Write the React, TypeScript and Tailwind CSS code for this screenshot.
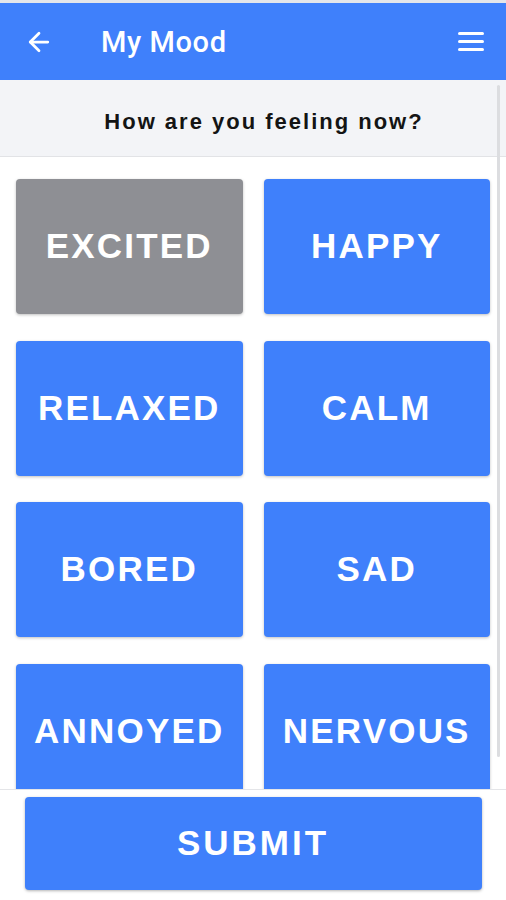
import { ArrowLeft } from "lucide-react";

const moods = ["EXCITED", "HAPPY", "RELAXED", "CALM", "BORED", "SAD", "ANNOYED", "NERVOUS"];

export default function App() {
  const selected = "EXCITED";

  return (
    <div className="flex h-[900px] w-[506px] flex-col overflow-hidden bg-white" style={{ fontFamily: '"Liberation Sans", Arial, sans-serif' }}>
      <div className="h-[3px] bg-[#e4e6ea]" />
      <header className="flex h-[77px] items-center bg-[#3f80fb] pl-[24px] pr-[22px] text-white">
        <ArrowLeft className="h-[30px] w-[30px]" strokeWidth={2.2} />
        <h1 className="ml-[47px] pt-[2px] text-[29px] font-medium tracking-[0.6px]" style={{ fontFamily: "Roboto, Arial, sans-serif" }}>My Mood</h1>
        <div className="ml-auto flex w-[26px] flex-col gap-[5px]">
          <span className="h-[3px] rounded-full bg-white" />
          <span className="h-[3px] rounded-full bg-white" />
          <span className="h-[3px] rounded-full bg-white" />
        </div>
      </header>

      <div className="relative flex min-h-0 flex-1 flex-col">
        <div className="flex h-[77px] items-center justify-center border-b border-[#e2e3e6] bg-[#f3f4f7] pl-[31px] pr-[9px] pt-[6px]">
          <p className="text-[22px] font-bold tracking-[2px] text-[#141414]">How are you feeling now?</p>
        </div>

        <div className="min-h-0 flex-1 overflow-hidden pl-[16px] pr-[16px] pt-[22px]">
          <div className="grid grid-cols-2 gap-x-[21px] gap-y-[26.5px]">
            {moods.map((m) => (
              <button
                key={m}
                className={`flex h-[135px] items-center justify-center rounded-[4px] text-[35px] font-bold tracking-[2.2px] text-white shadow-[0_1px_3px_rgba(0,0,0,0.25)] ${m === selected ? "bg-[#8e8f94]" : "bg-[#3f80fb]"}`}
              >
                {m}
              </button>
            ))}
          </div>
        </div>

        {/* scrollbar */}
        <div className="absolute right-[6px] top-[5px] h-[672px] w-[3px] rounded-full bg-[#dcdde0]" />
      </div>

      <footer className="flex h-[111px] shrink-0 justify-center border-t border-[#e4e5e8] bg-white pt-[7px]">
        <button className="h-[93px] w-[457px] rounded-[4px] bg-[#3f80fb] text-[35px] font-bold tracking-[3px] text-white shadow-[0_1px_3px_rgba(0,0,0,0.3)]">
          SUBMIT
        </button>
      </footer>
    </div>
  );
}
